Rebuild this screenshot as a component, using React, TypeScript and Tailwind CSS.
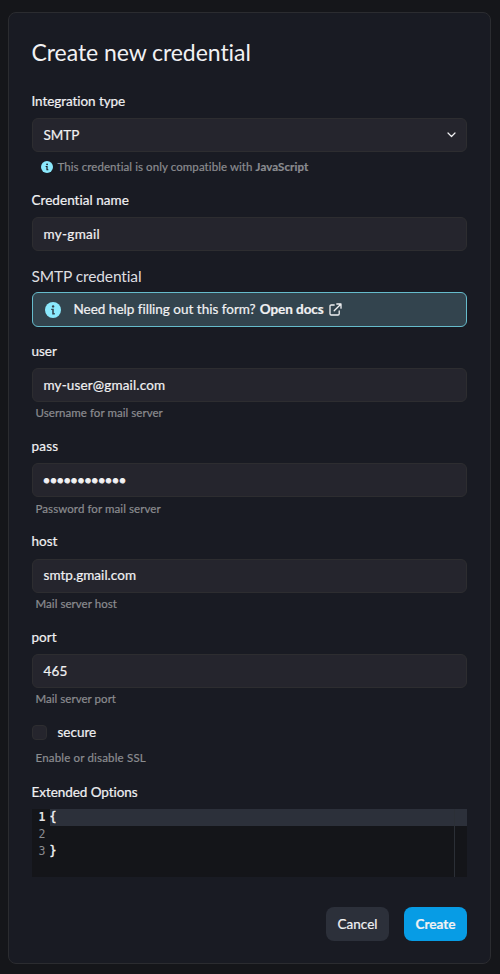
import type { ReactNode } from "react";

function InfoIcon({ size, hole }: { size: number; hole: string }) {
  return (
    <svg width={size} height={size} viewBox="0 0 16 16" className="shrink-0">
      <circle cx="8" cy="8" r="8" fill="#8be9fd" />
      <circle cx="8.1" cy="4.4" r="1.2" fill={hole} />
      <path d="M6.2 6.7h2.6v4.3h1v1.4H7.2V8.100h-1z" fill={hole} />
    </svg>
  );
}

function Label({ children }: { children: ReactNode }) {
  return <div className="flex h-5 items-center whitespace-nowrap text-[13.5px]">{children}</div>;
}

function Field({ children }: { children: ReactNode }) {
  return (
    <div className="flex h-[34px] items-center justify-between rounded-[6px] border border-[#2d2d30] bg-[#25252d] pr-[10px] pl-[11px] text-[13.5px] whitespace-nowrap">
      {children}
    </div>
  );
}

function Help({ children }: { children: ReactNode }) {
  return <div className="flex h-5 items-center pl-1 text-[11.5px] whitespace-nowrap text-[#8b8c90]">{children}</div>;
}

function Group({ label, value, help }: { label: ReactNode; value: ReactNode; help: ReactNode }) {
  return (
    <div className="h-[95.25px]">
      <Label>{label}</Label>
      <div className="mt-[7px] mb-[1px]">
        <Field>{value}</Field>
      </div>
      <Help>{help}</Help>
    </div>
  );
}

export default function App() {
  return (
    <div className="h-[974px] w-[500px] bg-[#15161a] pt-3 pl-2 font-['Lato','Noto_Sans',sans-serif] text-[#f1f1f3] [font-variant-ligatures:none] [-webkit-text-stroke:0.2px_currentColor]">
      <div className="h-[952px] w-[483px] rounded-[8px] border border-[#2b2c30] bg-[#191b23] pt-[23px] pr-[23px] pl-[22.5px]">
        <h1 className="flex h-8 items-center text-[23px] whitespace-nowrap [-webkit-text-stroke:0]">
          <span className="tracking-[-0.06px]">Create new credential</span>
        </h1>
        <div className="mt-[23px]">
          <Label><span className="tracking-[-0.07px]">Integration type</span></Label>
        </div>
        <div className="mt-[7px]">
          <Field>
            <span>SMTP</span>
            <svg width="9" height="6" viewBox="0 0 9 6" fill="none" stroke="#f1f1f3" strokeWidth="1.2" strokeLinecap="round" strokeLinejoin="round">
              <path d="M1 1l3.5 3.5L8 1" />
            </svg>
          </Field>
        </div>
        <div className="mt-[5px] flex h-5 items-center gap-[5px] pl-[9px] text-[11.5px] whitespace-nowrap text-[#8b8c90]">
          <InfoIcon size={12} hole="#191b23" />
          <span className="tracking-[0.08px]">This credential is only compatible with <b>JavaScript</b></span>
        </div>
        <div className="mt-[13px]">
          <Label><span className="tracking-[0.04px]">Credential name</span></Label>
        </div>
        <div className="mt-[7px]">
          <Field><span className="tracking-[0.3px]">my-gmail</span></Field>
        </div>
        <h2 className="mt-[16px] flex h-5 items-center text-[15.5px] whitespace-nowrap text-[#dedee0] [-webkit-text-stroke:0]">
          <span className="tracking-[-0.12px]">SMTP credential</span>
        </h2>
        <div className="mt-[5px] flex h-[35px] items-center rounded-[6px] border border-[#66bccc] bg-[#33444e] pl-[12px] text-[13.5px] whitespace-nowrap">
          <InfoIcon size={16} hole="#33444e" />
          <span className="ml-[13px]">Need help filling out this form?</span>
          <b className="ml-[4px] tracking-[-0.04px]">Open docs</b>
          <svg className="ml-[5px]" width="13" height="13" viewBox="0 0 13 13" fill="none" stroke="#f1f1f3" strokeWidth="1.3" strokeLinecap="round" strokeLinejoin="round">
            <path d="M5.2 2H2.2Q1 2 1 3.2V10.8Q1 12 2.2 12H9Q10.2 12 10.2 10.8V8M7.8 1H12V5.2M12 1L5.2 7.8" />
          </svg>
        </div>
        <div className="mt-[14px]">
          <Group label={<span>user</span>} value={<span className="tracking-[0.15px]">my-user@gmail.com</span>} help={<span className="tracking-[0.05px]">Username for mail server</span>} />
          <Group label={<span className="tracking-[0.25px]">pass</span>} value={<span className="font-['Liberation_Sans',sans-serif] text-[17px] tracking-[0.95px] [-webkit-text-stroke:1px]">••••••••••••</span>} help={<span className="tracking-[0.08px]">Password for mail server</span>} />
          <Group label={<span>host</span>} value={<span className="tracking-[0.04px]">smtp.gmail.com</span>} help={<span className="tracking-[0.05px]">Mail server host</span>} />
          <Group label={<span>port</span>} value={<span className="tracking-[0.15px]">465</span>} help={<span className="tracking-[0.04px]">Mail server port</span>} />
        </div>
        <div className="flex h-5 items-center gap-[11px] text-[13.5px]">
          <div className="h-[15px] w-[15px] rounded-[4px] border border-[#2d2d30] bg-[#25252d]" />
          <span>secure</span>
        </div>
        <div className="mt-[6px]">
          <Help><span className="tracking-[0.18px]">Enable or disable SSL</span></Help>
        </div>
        <div className="mt-[14px]">
          <Label><span className="tracking-[-0.06px]">Extended Options</span></Label>
        </div>
        <div className="mt-[7px] flex h-[68px] bg-[#141519] font-['DejaVu_Sans_Mono',monospace] text-[11.5px] leading-[17px]">
          <div className="w-[18px] pr-[4px] text-right text-[#8b8c90] [-webkit-text-stroke:0]">
            <div className="font-bold text-[#e4e4e6]">1</div>
            <div>2</div>
            <div>3</div>
          </div>
          <div className="relative flex-1 [-webkit-text-stroke:0.45px]">
            <div className="h-[17px] bg-[#2c303a]">{"{"}</div>
            <div className="h-[17px]" />
            <div className="h-[17px]">{"}"}</div>
            <div className="absolute top-0 right-[12px] h-[68px] w-px bg-[#2b2f36]" />
          </div>
        </div>
        <div className="mt-[30px] flex justify-end gap-[15px] text-[13.5px]">
          <button className="flex h-[34px] w-[63px] items-center justify-center rounded-[8px] bg-[#2c303a]"><span>Cancel</span></button>
          <button className="flex h-[34px] w-[63px] items-center justify-center rounded-[8px] bg-[#079ce5] font-bold"><span>Create</span></button>
        </div>
      </div>
    </div>
  );
}
